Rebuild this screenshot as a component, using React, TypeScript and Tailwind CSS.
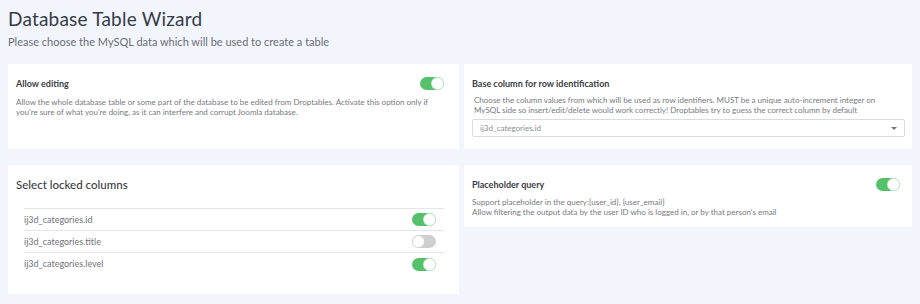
import { useState } from "react";

type ToggleProps = {
  on: boolean;
  onChange?: () => void;
};

function Toggle({ on, onChange }: ToggleProps) {
  return (
    <button
      type="button"
      onClick={onChange}
      className={`relative h-[13px] w-[24px] shrink-0 rounded-full ${
        on ? "bg-[#56c16b]" : "bg-[#cfcfcf]"
      }`}
    >
      <span
        className={`absolute top-[1px] h-[11px] w-[11px] rounded-full bg-white ${
          on ? "left-[12px] shadow-[0_0_0_1px_#cfeed5]" : "left-[1px]"
        }`}
      />
    </button>
  );
}

const columns = [
  { name: "ij3d_categories.id", locked: true },
  { name: "ij3d_categories.title", locked: false },
  { name: "ij3d_categories.level", locked: true },
];

export default function App() {
  const [allowEdit, setAllowEdit] = useState(true);
  const [placeholder, setPlaceholder] = useState(true);
  const [locked, setLocked] = useState(columns.map((c) => c.locked));

  return (
    <div className="min-h-[304px] bg-[#f3f5fc] px-2 pt-[6px] font-['Lato','Open_Sans',sans-serif] text-[#3d414d]">
      <h1 className="text-[19px] leading-[26px] tracking-[0.2px] text-[#363b47]">
        Database Table Wizard
      </h1>
      <p className="mt-[3px] text-[11px] leading-[14px] text-[#6a6d75]">
        Please choose the MySQL data which will be used to create a table
      </p>

      <div className="mt-[15px] grid grid-cols-[451px_1fr] gap-x-[5px]">
        <div className="h-[85px] bg-white pl-2 pr-[15px] pt-[13px]">
          <div className="flex items-center justify-between">
            <span className="text-[9px] font-bold text-[#3a3d45]">Allow editing</span>
            <Toggle on={allowEdit} onChange={() => setAllowEdit(!allowEdit)} />
          </div>
          <p className="mt-[6px] text-[8px] leading-[10px] text-[#777a80]">
            Allow the whole database table or some part of the database to be edited from
            Droptables. Activate this option only if you're sure of what you're doing, as it can
            interfere and corrupt Joomla database.
          </p>
        </div>

        <div className="h-[85px] bg-white pl-2 pr-[7px] pt-[13px]">
          <span className="block text-[9px] font-bold leading-[14px] text-[#3a3d45]">
            Base column for row identification
          </span>
          <p className="mt-[4px] pl-[2px] pr-[16px] text-[8px] leading-[10px] text-[#777a80]">
            Choose the column values from which will be used as row identifiers. MUST be a unique
            auto-increment integer on MySQL side so insert/edit/delete would work correctly!
            Droptables try to guess the correct column by default
          </p>
          <div className="mt-[4px] flex h-[18px] items-center justify-between rounded-[2px] border border-[#d8dbe2] pl-[7px] pr-[7px]">
            <span className="text-[8px] text-[#8a8d93]">ij3d_categories.id</span>
            <span className="h-0 w-0 border-x-[3px] border-t-[3px] border-x-transparent border-t-[#777]" />
          </div>
        </div>
      </div>

      <div className="mt-4 grid grid-cols-[451px_1fr] items-start gap-x-[5px]">
        <div className="h-[129px] bg-white pl-2 pr-[15px] pt-[12px]">
          <h2 className="text-[11.5px] font-medium leading-[16px] text-[#3a3d45]">
            Select locked columns
          </h2>
          <div className="mt-[15px] ml-2 border-t border-[#e3e5ea]">
            {columns.map((col, i) => (
              <div
                key={col.name}
                className="flex h-[22px] items-center justify-between border-b border-[#e3e5ea] pr-[8px] last:border-b-0"
              >
                <span className="text-[9px] text-[#707379]">{col.name}</span>
                <Toggle
                  on={locked[i]}
                  onChange={() => setLocked(locked.map((v, j) => (j === i ? !v : v)))}
                />
              </div>
            ))}
          </div>
        </div>

        <div className="h-[62px] bg-white pl-2 pr-[12px] pt-[13px]">
          <div className="flex items-center justify-between">
            <span className="text-[9px] font-bold text-[#3a3d45]">Placeholder query</span>
            <Toggle on={placeholder} onChange={() => setPlaceholder(!placeholder)} />
          </div>
          <p className="mt-[5px] text-[8px] leading-[10px] text-[#777a80]">
            Support placeholder in the query:{"{user_id}"}, {"{user_email}"}
            <br />
            Allow filtering the output data by the user ID who is logged in, or by that person's
            email
          </p>
        </div>
      </div>
    </div>
  );
}
